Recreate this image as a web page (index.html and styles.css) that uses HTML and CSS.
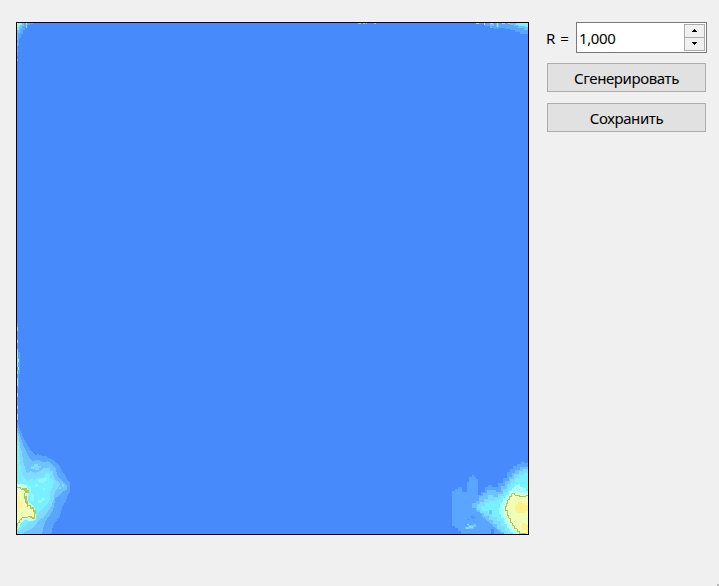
FILE: index.html
```html
<!DOCTYPE html>
<html lang="ru">
<head>
<meta charset="utf-8">
<title>Генератор</title>
<link rel="stylesheet" href="styles.css">
</head>
<body>
<main class="window">
  <svg class="map" viewBox="17 23 511 511" shape-rendering="crispEdges" aria-hidden="true">
    <!-- lower left coast -->
    <g transform="translate(10 410) scale(.333333)">
      <path fill="#5aa5ff" d="M21 30L27 50 33 66 39 82 48 97 57 113 66 126 75 135 85 132 96 138 111 139 120 146 133 151 141 162 150 171 156 184 165 193 171 207 180 217 180 246 174 255 168 273 159 288 153 305 150 321 141 330 132 342 126 357 124 372H21Z"/>
      <path fill="#6ec3ff" d="M21 48L27 66 33 85 39 103 48 123 57 142 69 153 84 149 102 157 114 154 129 165 137 175 141 194 150 207 162 219 172 226 171 239 157 246 147 258 136 263 133 282 129 300 120 315 108 331 102 345 96 372H21Z"/>
      <path fill="#7ddcff" d="M21 63L27 84 30 108 36 129 39 153 45 174 51 190 63 183 75 188 90 184 99 174H120V183H129V195L137 210 150 220 145 234 135 243 132 264 126 285 114 303 105 318 87 330 78 345 69 354 51 363 36 372H21Z"/>
      <path fill="#7ddcff" d="M63 168h9v-6h12v6h9v6h-6v6H75v-3H63z"/>
      <path fill="#78f0ff" d="M21 84L27 110 29 150 33 180 39 198 51 213 63 207 75 209 84 202 102 204 108 189H118L120 204 132 216 129 231 121 243V264L111 285 99 297 84 312 75 333 54 336 42 351 30 363H21Z"/>
      <path fill="#8ff8ff" d="M84 208h12v-4h15v9h-9v6H87zM42 222h12v6h9v24h9v21H60v-15h-9v-15h-9zM84 270h9v-6h12v9h-9v6H84zM75 222h9v9h-9zM99 234h6v6h-6z"/>
      <path fill="#c5ffe6" d="M21 222H39L51 230 57 243 53 258 56 276 69 286 78 303V330L60 333 45 330 33 339 28 352 21 357Z"/>
      <path fill="#efffb5" stroke="#abc557" stroke-width="3" d="M22 233H33V238H45V243H50V249H45V267H49V280H54V288H63V294H70V305H74V326H67V320H54V323H36V330H30V339H24V347H21"/>
      <path fill="#fff3a0" d="M24 258h7v15h9v20h-9v12h-7z"/>
      <path fill="none" stroke="#b3c552" stroke-width="4" d="M36 237h12v6h6v6M48 258v18h5v14M60 294h10v9h5v9M60 323h15"/>
      <path fill="none" stroke="#c9d59b" stroke-width="3" stroke-dasharray="6 9 3 6" d="M22 90V222M22 348v23"/>
      <path fill="#7ddcff" d="M155 222h6v9h-6zM147 231h6v6h-6z"/>
    </g>
    <!-- lower right coast -->
    <g transform="translate(440 455) scale(.333333)">
      <path fill="#5aa5ff" d="M36 237V108H45V102H54V96H66V111H81V81H87V66H95V60H103V66H108V72H114V120H123V111H135V97H144V90H156V96H174V84H189V69H200V51H209V42H218V33H231V27H243V21H255V24H264V237Z"/>
      <path fill="#4689fb" d="M36 213h9v6h9v9h9v9H36zM153 222h8v15h-8z"/>
      <path fill="#6ec3ff" d="M97 153V144H108V138H118V123H129V114H141V105H168V111H183V93H195V78H207V66H216V54H225V45H240V36H264V237H195L180 231 168 222 159 210 147 204 138 192 129 189 123 174 108 168V159H97Z"/>
      <path fill="#7ddcff" d="M111 156V147H121V141H132V132H144V120H159V126H174V117H189V102H201V87H210V72H222V57H237V48H249V42H264V237H192V231H183V222H171V207H159V195H147V183H132V174H120V165H111Z"/>
      <path fill="#78f0ff" d="M123 153H135V145H147V138H165V133H180V124H192V111H204V95H213V84H225V69H237V60H252V54H264V237H204V228H195V213H183V198H171V186H156V177H144V168H126Z"/>
      <path fill="#a0ffff" d="M180 158V144H189V129H198V120H207V109H216V99H225V91H234V86H240V95H249V100H258V109H264V237H219V231H210V220H201V207H192V190H183V177H177V158Z"/>
      <path fill="#cdffe1" d="M190 150H195V138H201V127H207V117H216V111H240V115H264V237H228V231H216V221H207V208H198V193H192Z"/>
      <path fill="#efffb5" stroke="#abc557" stroke-width="3" d="M266 122H258V125H240V121H225V117H216V124H209V134H204V145H199V155H196V166H202V181H206V190H211V204H217V213H223V222H232V230H240V237H266Z"/>
      <path fill="#fff08c" d="M228 147h6v-8h12v5h12v6h6v18h-9v6h-24v-6h-6v-15h3zM243 213h3v-9h12v6h6v27h-6v-12h-12z"/>
      <path fill="#6ec3ff" d="M75 216h9v-6h15v-3h9v9h-6v6H75zM147 165h9v12h-9zM159 207h9v9h-9z"/>
      <path fill="#7ddcff" d="M78 216h9v-3h12v6H87v3h-9zM81 207h6v3h-6z"/>
      <path fill="#4f97e8" d="M93 183h6v-3h3v6h6v3h-6v3h-6v-3h-3zM81 192h6v3h-6zM75 141h3v3h-3zM99 198h6v3h-6z"/>
      <path fill="#d6ffff" d="M222 96h6v6h-6zM210 108h6v6h-6zM234 105h9v4h-9zM186 141h4v6h-4zM189 180h4v6h-4z"/>
    </g>
    <!-- upper right edge -->
    <g transform="translate(470 15) scale(.333333)">
      <path fill="#5aa5ff" d="M18 24H174V57H150V51H135V45H120V42H105V39H87V42H72V39H60V33H45V27H18Z"/>
      <path fill="#6ec3ff" d="M60 24h12v9h-6v6h-6zM78 24h9v12h-9zM120 24h54v21h-12v-6h-18v-6h-12v-3h-12z"/>
      <path fill="#78f0ff" d="M18 24h9v3h-9zM42 24h3v6h-3zM60 24h6v3h-6zM81 24h3v12h-3zM96 24h9v3h-9zM138 24h36v12h-9v-3h-18v-3h-9z"/>
      <path fill="#a0f5cd" d="M21 24h3v3h-3zM66 24h3v3h-3zM114 24h6v3h-6zM147 24h27v3h-27z"/>
    </g>
    <!-- upper left corner -->
    <g transform="translate(10 15) scale(.333333)">
      <path fill="#5aa5ff" d="M21 24H69V27H60V30H51V36H45V45H39V57H33V69H27V93H24V123H21Z"/>
      <path fill="#6ec3ff" d="M21 24H42V33H36V42H30V54H24V75H21Z"/>
      <path fill="#78f0ff" d="M21 24H36V30H30V36H27V45H21ZM48 24h3v15h-3z"/>
      <path fill="#b8f5c1" d="M21 24h9v6h-6v6h-3z"/>
      <path fill="#6ec3ff" d="M21 84h3v9h-3zM21 105h3v6h-3zM21 132h3v6h-3z"/>
    </g>
    <!-- small islets on the top and left edges -->
    <path fill="#6fe0d5" d="M358 23h3v1h-3zM363 23h2v1h-2zM366 23h1v1h-1zM374 23h2v1h-2z"/>
    <path fill="#5aa5ff" d="M17 323h1v97h-1zM18 352h2v22h-2zM18 374h1v14h-1z"/>
    <path fill="#78f0ff" d="M17 327h1v4h-1zM17 340h1v3h-1zM17 349h1v18h-1zM18 359h1v3h-1zM18 367h1v3h-1zM17 371h1v3h-1zM17 378h1v8h-1zM17 393h1v4h-1zM17 406h1v3h-1zM17 414h1v6h-1z"/>
  </svg>
  <section class="controls">
    <div class="field">
      <label class="caption" for="roughness">R =</label>
      <div class="spin">
        <input class="value" id="roughness" value="1,000">
        <div class="steps">
          <button class="step" aria-label="Больше"><svg width="7" height="4" shape-rendering="crispEdges"><path d="M3 0h1v1h1v1h1v1H1V2h1V1h1z"/></svg></button>
          <button class="step" aria-label="Меньше"><svg width="7" height="4" shape-rendering="crispEdges"><path d="M1 0h5v1H5v1H4v1H3V2H2V1H1z"/></svg></button>
        </div>
      </div>
    </div>
    <button class="action">Сгенерировать</button>
    <button class="action">Сохранить</button>
  </section>
  <span class="grip"></span>
</main>
</body>
</html>
```
FILE: styles.css
```css
* { box-sizing: border-box; }
body { margin: 0; background: #f0f0f0; }
button, input { font: inherit; color: inherit; letter-spacing: inherit; padding: 0; border-radius: 0; }
.window {
  position: relative;
  display: flex;
  align-items: flex-start;
  gap: 17px;
  height: 586px;
  padding: 20px 12px 0 16px;
  border-top: 2px solid #b9b9b9;
  border-image: linear-gradient(#f0f0f0 50%, #b5b5b5 50%) 2 0 0 0;
  font: 15px "Noto Sans", "Open Sans", sans-serif;
  letter-spacing: -0.4px;
  color: #000;
  overflow: hidden;
}
.map {
  flex: none;
  width: 513px;
  height: 513px;
  border: 1px solid #000;
  background: #468afb;
}
.controls { flex: 1; min-width: 0; display: flex; flex-direction: column; }
.field { display: flex; align-items: center; height: 31px; margin-bottom: 10px; }
.caption { flex: none; width: 30px; white-space: pre; letter-spacing: 0; word-spacing: 1px; }
.spin {
  display: flex;
  flex: 1;
  min-width: 0;
  height: 31px;
  padding: 1px;
  border: 1px solid #7a7a7a;
  background: #fff;
}
.value { flex: 1; width: 0; min-width: 0; padding: 0 0 0 1px; border: 0; outline: 0; background: none; }
.steps { flex: none; display: flex; flex-direction: column; width: 21px; height: 27px; border: 1px solid #acacac; }
.step {
  display: flex;
  flex: 1;
  align-items: center;
  justify-content: center;
  border: 0;
  background: #f0f0f0;
}
.step + .step { border-top: 1px solid #acacac; }
.action {
  height: 29px;
  margin: 0 1px 11px;
  padding-top: 1px;
  border: 1px solid #adadad;
  background: #e1e1e1;
}
.grip { position: absolute; right: 0; bottom: 0; width: 2px; height: 2px; background: #b8b8b8; }
```
